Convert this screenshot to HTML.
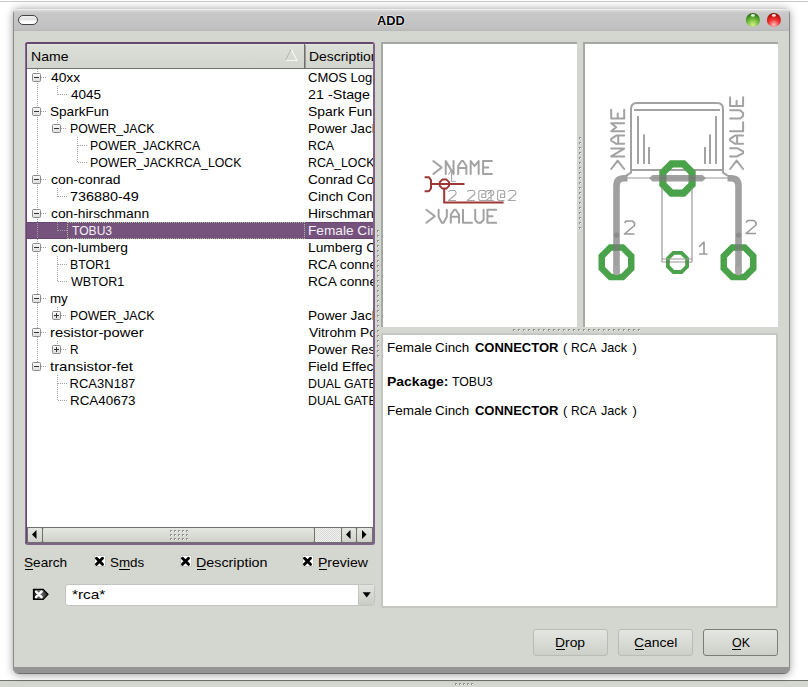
<!DOCTYPE html>
<html><head><meta charset="utf-8"><style>
*{margin:0;padding:0;box-sizing:border-box}
html,body{width:808px;height:687px;overflow:hidden;background:#fff;position:relative}
.t{position:absolute;font-family:"Liberation Sans",sans-serif;font-size:13px;line-height:30px;white-space:pre;transform-origin:0 0}
.a{position:absolute}
svg{position:absolute;left:0;top:0}
</style></head><body>
<div class="a" style="left:0;top:1px;width:808px;height:1px;background:#c8cac4"></div>
<!-- bottom parent window strip -->
<div class="a" style="left:0;top:680px;width:808px;height:1px;background:#70726d"></div>
<div class="a" style="left:0;top:681px;width:808px;height:6px;background:#d4d6d0"></div>
<!-- window shadow -->
<div class="a" style="left:13px;top:8px;width:777px;height:666px;border-radius:6px;box-shadow:0 1px 9px rgba(0,0,0,.38)"></div>
<!-- window frame -->
<div class="a" style="left:13px;top:8px;width:777px;height:666px;border-radius:6px;overflow:hidden;background:#d4d6d0">
  <div class="a" style="left:0;top:0;width:777px;height:23px;background:linear-gradient(#d2d2d2 0 1px,#eeeeee 1px 2px,#dcdcdc 2px,#c8c8c8 5px,#c0c0c0 21px,#b9b9b9 22px)"></div>
  <div class="a" style="left:0;top:0;width:1px;height:666px;background:#8a8a8a"></div>
  <div class="a" style="left:776px;top:0;width:1px;height:666px;background:#8a8a8a"></div>
  <div class="a" style="left:0;top:659px;width:777px;height:6px;background:#959595"></div>
  <div class="a" style="left:0;top:665px;width:777px;height:1px;background:#6e6e6e"></div>
</div>
<!-- title buttons -->
<div class="a" style="left:18px;top:15px;width:20px;height:10px;border-radius:5px;border:1px solid #444;background:linear-gradient(#f0f0f0,#e2e2e2 45%,#fdfdfd 65%,#ffffff)"></div>
<svg width="808" height="40" style="left:0;top:0">
<defs>
<radialGradient id="gg" cx="0.5" cy="0.85" r="0.85"><stop offset="0" stop-color="#d4f08a"/><stop offset="0.45" stop-color="#78c040"/><stop offset="0.8" stop-color="#3c8a1c"/><stop offset="1" stop-color="#1f5a0c"/></radialGradient>
<radialGradient id="rg" cx="0.5" cy="0.85" r="0.85"><stop offset="0" stop-color="#ffc0c0"/><stop offset="0.45" stop-color="#f03434"/><stop offset="0.8" stop-color="#c81414"/><stop offset="1" stop-color="#6e0404"/></radialGradient>
</defs>
<circle cx="752.9" cy="19.9" r="7" fill="url(#gg)"/>
<ellipse cx="752.9" cy="15.4" rx="2" ry="1.4" fill="#fff" opacity="0.85"/>
<circle cx="773.9" cy="19.9" r="7" fill="url(#rg)"/>
<ellipse cx="773.9" cy="15.4" rx="2" ry="1.4" fill="#fff" opacity="0.85"/>
</svg>


<!-- tree widget -->
<div class="a" style="left:25px;top:42px;width:350px;height:503px;border:2px solid #65466d;border-right-color:#7f6287;border-bottom-color:#7f6287;border-radius:3px;background:#fff;box-shadow:inset 0 0 0 0 #000"></div>
<div class="a" style="left:25px;top:45px;width:1px;height:497px;background:#8a6c92"></div>
<div class="a" style="left:27px;top:44px;width:346px;height:25px;background:linear-gradient(#e6e8e3 0,#dcded8 2px,#d2d4ce 100%);border-bottom:1px solid #70726d"></div>
<div class="a" style="left:304px;top:44px;width:1px;height:24px;background:#6e706b"></div><div class="a" style="left:305px;top:45px;width:1px;height:23px;background:#9a9c97"></div>
<svg width="808" height="687" style="pointer-events:none">
  <path d="M285.5,60.5L291,49L297,60.5Z" fill="none" stroke="#f6f6f4" stroke-width="1.2"/>
  <path d="M285.5,60.5L291,49" fill="none" stroke="#a8aaa5" stroke-width="1"/>
</svg>
<!-- selected row -->
<div class="a" style="left:27px;top:222px;width:346px;height:17px;background:#75537d;border-top:1px solid #6b4773;border-bottom:1px solid #6b4773"></div>
<div class="a" style="left:67px;top:222px;width:238px;height:17px;border:1px dotted #a8c49a"></div>
<svg width="808" height="687">
<defs><linearGradient id="bg" x1="0" y1="0" x2="0" y2="1"><stop offset="0" stop-color="#fafafa"/><stop offset="1" stop-color="#dcdcdc"/></linearGradient></defs>
<path d="M41,77.5H47" stroke="#a0a0a0" stroke-dasharray="1 1"/>
<path d="M58,94.5H67" stroke="#a0a0a0" stroke-dasharray="1 1"/>
<path d="M41,111.5H47" stroke="#a0a0a0" stroke-dasharray="1 1"/>
<path d="M61,128.5H67" stroke="#a0a0a0" stroke-dasharray="1 1"/>
<path d="M78,145.5H87" stroke="#a0a0a0" stroke-dasharray="1 1"/>
<path d="M78,162.5H87" stroke="#a0a0a0" stroke-dasharray="1 1"/>
<path d="M41,179.5H47" stroke="#a0a0a0" stroke-dasharray="1 1"/>
<path d="M58,196.5H67" stroke="#a0a0a0" stroke-dasharray="1 1"/>
<path d="M41,213.5H47" stroke="#a0a0a0" stroke-dasharray="1 1"/>
<path d="M58,230.5H67" stroke="#a0a0a0" stroke-dasharray="1 1"/>
<path d="M41,247.5H47" stroke="#a0a0a0" stroke-dasharray="1 1"/>
<path d="M58,264.5H67" stroke="#a0a0a0" stroke-dasharray="1 1"/>
<path d="M58,281.5H67" stroke="#a0a0a0" stroke-dasharray="1 1"/>
<path d="M41,298.5H47" stroke="#a0a0a0" stroke-dasharray="1 1"/>
<path d="M61,315.5H67" stroke="#a0a0a0" stroke-dasharray="1 1"/>
<path d="M41,332.5H47" stroke="#a0a0a0" stroke-dasharray="1 1"/>
<path d="M61,349.5H67" stroke="#a0a0a0" stroke-dasharray="1 1"/>
<path d="M41,366.5H47" stroke="#a0a0a0" stroke-dasharray="1 1"/>
<path d="M58,383.5H67" stroke="#a0a0a0" stroke-dasharray="1 1"/>
<path d="M58,400.5H67" stroke="#a0a0a0" stroke-dasharray="1 1"/>
<path d="M37.5,69V362" stroke="#a0a0a0" stroke-dasharray="1 1"/>
<path d="M57.5,86V95" stroke="#a0a0a0" stroke-dasharray="1 1"/>
<path d="M57.5,120V129" stroke="#a0a0a0" stroke-dasharray="1 1"/>
<path d="M77.5,137V163" stroke="#a0a0a0" stroke-dasharray="1 1"/>
<path d="M57.5,188V197" stroke="#a0a0a0" stroke-dasharray="1 1"/>
<path d="M57.5,222V231" stroke="#a0a0a0" stroke-dasharray="1 1"/>
<path d="M57.5,256V282" stroke="#a0a0a0" stroke-dasharray="1 1"/>
<path d="M57.5,307V316" stroke="#a0a0a0" stroke-dasharray="1 1"/>
<path d="M57.5,341V350" stroke="#a0a0a0" stroke-dasharray="1 1"/>
<path d="M57.5,375V401" stroke="#a0a0a0" stroke-dasharray="1 1"/>
<rect x="32.5" y="73.5" width="8" height="8" rx="1" fill="url(#bg)" stroke="#8a8a8a"/>
<path d="M34,77.5H39" stroke="#333"/>
<rect x="32.5" y="107.5" width="8" height="8" rx="1" fill="url(#bg)" stroke="#8a8a8a"/>
<path d="M34,111.5H39" stroke="#333"/>
<rect x="52.5" y="124.5" width="8" height="8" rx="1" fill="url(#bg)" stroke="#8a8a8a"/>
<path d="M54,128.5H59" stroke="#333"/>
<rect x="32.5" y="175.5" width="8" height="8" rx="1" fill="url(#bg)" stroke="#8a8a8a"/>
<path d="M34,179.5H39" stroke="#333"/>
<rect x="32.5" y="209.5" width="8" height="8" rx="1" fill="url(#bg)" stroke="#8a8a8a"/>
<path d="M34,213.5H39" stroke="#333"/>
<rect x="32.5" y="243.5" width="8" height="8" rx="1" fill="url(#bg)" stroke="#8a8a8a"/>
<path d="M34,247.5H39" stroke="#333"/>
<rect x="32.5" y="294.5" width="8" height="8" rx="1" fill="url(#bg)" stroke="#8a8a8a"/>
<path d="M34,298.5H39" stroke="#333"/>
<rect x="52.5" y="311.5" width="8" height="8" rx="1" fill="url(#bg)" stroke="#8a8a8a"/>
<path d="M54,315.5H59" stroke="#333"/>
<path d="M56.5,313V318" stroke="#333"/>
<rect x="32.5" y="328.5" width="8" height="8" rx="1" fill="url(#bg)" stroke="#8a8a8a"/>
<path d="M34,332.5H39" stroke="#333"/>
<rect x="52.5" y="345.5" width="8" height="8" rx="1" fill="url(#bg)" stroke="#8a8a8a"/>
<path d="M54,349.5H59" stroke="#333"/>
<path d="M56.5,347V352" stroke="#333"/>
<rect x="32.5" y="362.5" width="8" height="8" rx="1" fill="url(#bg)" stroke="#8a8a8a"/>
<path d="M34,366.5H39" stroke="#333"/>
</svg>
<div class="a" style="left:0;top:0;width:808px;height:687px;clip-path:inset(44px 435px 160px 27px)">
<span class="t" style="left:30.92px;top:42px;color:#000;transform:scaleX(1.080);">Name</span>
<span class="t" style="left:309.13px;top:42px;color:#000;transform:scaleX(1.070);">Description</span>
<span class="t" style="left:50.80px;top:63px;color:#000;transform:scaleX(1.063);">40xx</span>
<span class="t" style="left:308.00px;top:63px;color:#000;">CMOS Logic Family</span>
<span class="t" style="left:71.10px;top:80px;color:#000;transform:scaleX(1.038);">4045</span>
<span class="t" style="left:307.90px;top:80px;color:#000;transform:scaleX(1.100);">21 -Stage Binary Counter</span>
<span class="t" style="left:49.76px;top:97px;color:#000;transform:scaleX(1.044);">SparkFun</span>
<span class="t" style="left:307.93px;top:97px;color:#000;transform:scaleX(1.070);">Spark Fun Electronics</span>
<span class="t" style="left:69.66px;top:114px;color:#000;transform:scaleX(0.944);">POWER_JACK</span>
<span class="t" style="left:307.95px;top:114px;color:#000;transform:scaleX(1.050);">Power Jack</span>
<span class="t" style="left:89.76px;top:131px;color:#000;transform:scaleX(0.941);">POWER_JACKRCA</span>
<span class="t" style="left:308.05px;top:131px;color:#000;transform:scaleX(0.950);">RCA</span>
<span class="t" style="left:89.75px;top:148px;color:#000;transform:scaleX(0.949);">POWER_JACKRCA_LOCK</span>
<span class="t" style="left:308.05px;top:148px;color:#000;transform:scaleX(0.950);">RCA_LOCK</span>
<span class="t" style="left:50.80px;top:165px;color:#000;transform:scaleX(1.067);">con-conrad</span>
<span class="t" style="left:307.95px;top:165px;color:#000;transform:scaleX(1.050);">Conrad Connectors</span>
<span class="t" style="left:70.00px;top:182px;color:#000;transform:scaleX(1.105);">736880-49</span>
<span class="t" style="left:307.94px;top:182px;color:#000;transform:scaleX(1.060);">Cinch Connector</span>
<span class="t" style="left:50.80px;top:199px;color:#000;transform:scaleX(1.061);">con-hirschmann</span>
<span class="t" style="left:307.94px;top:199px;color:#000;transform:scaleX(1.060);">Hirschmann Connectors</span>
<span class="t" style="left:71.50px;top:216px;color:#f4f0f6;transform:scaleX(0.930);">TOBU3</span>
<span class="t" style="left:307.95px;top:216px;color:#f4f0f6;transform:scaleX(1.050);">Female Cinch CONNECTOR</span>
<span class="t" style="left:50.80px;top:233px;color:#000;transform:scaleX(1.064);">con-lumberg</span>
<span class="t" style="left:307.94px;top:233px;color:#000;transform:scaleX(1.060);">Lumberg Connectors</span>
<span class="t" style="left:69.66px;top:250px;color:#000;transform:scaleX(0.943);">BTOR1</span>
<span class="t" style="left:307.95px;top:250px;color:#000;transform:scaleX(1.050);">RCA connector</span>
<span class="t" style="left:70.60px;top:267px;color:#000;transform:scaleX(0.960);">WBTOR1</span>
<span class="t" style="left:307.95px;top:267px;color:#000;transform:scaleX(1.050);">RCA connector</span>
<span class="t" style="left:49.77px;top:284px;color:#000;transform:scaleX(1.025);">my</span>
<span class="t" style="left:69.66px;top:301px;color:#000;transform:scaleX(0.944);">POWER_JACK</span>
<span class="t" style="left:307.95px;top:301px;color:#000;transform:scaleX(1.050);">Power Jack</span>
<span class="t" style="left:49.66px;top:318px;color:#000;transform:scaleX(1.136);">resistor-power</span>
<span class="t" style="left:309.00px;top:318px;color:#000;transform:scaleX(1.060);">Vitrohm Power Resistor</span>
<span class="t" style="left:69.69px;top:335px;color:#000;transform:scaleX(0.913);">R</span>
<span class="t" style="left:307.94px;top:335px;color:#000;transform:scaleX(1.060);">Power Resistor</span>
<span class="t" style="left:50.20px;top:352px;color:#000;transform:scaleX(1.149);">transistor-fet</span>
<span class="t" style="left:307.93px;top:352px;color:#000;transform:scaleX(1.070);">Field Effect Transistors</span>
<span class="t" style="left:69.60px;top:369px;color:#000;">RCA3N187</span>
<span class="t" style="left:308.05px;top:369px;color:#000;transform:scaleX(0.950);">DUAL GATE MOSFET</span>
<span class="t" style="left:69.57px;top:386px;color:#000;transform:scaleX(1.031);">RCA40673</span>
<span class="t" style="left:308.05px;top:386px;color:#000;transform:scaleX(0.950);">DUAL GATE MOSFET</span>
</div>
<!-- scrollbar -->
<div class="a" style="left:27px;top:527px;width:346px;height:16px;background:#d4d6d0;border-top:1px solid #6e706b;border-bottom:1px solid #6e706b"></div>
<div class="a" style="left:27px;top:527px;width:16px;height:16px;border:1px solid #6e706b;border-radius:2px;background:linear-gradient(#e4e6e1,#cfd1cb)"></div>
<div class="a" style="left:42px;top:527px;width:273px;height:16px;border:1px solid #6e706b;border-radius:2px;background:linear-gradient(#e4e6e1,#cfd1cb)"></div>
<div class="a" style="left:315px;top:528px;width:27px;height:14px;background-image:conic-gradient(#d8d8d6 25%,#f2f2f0 0 50%,#d8d8d6 0 75%,#f2f2f0 0);background-size:2px 2px"></div>
<div class="a" style="left:341px;top:527px;width:16px;height:16px;border:1px solid #6e706b;border-radius:2px;background:linear-gradient(#e4e6e1,#cfd1cb)"></div>
<div class="a" style="left:356px;top:527px;width:17px;height:16px;border:1px solid #6e706b;border-radius:2px;background:linear-gradient(#e4e6e1,#cfd1cb)"></div>
<svg width="808" height="687">
  <path d="M32,534.5L36.5,530V539Z" fill="#000"/>
  <path d="M346,534.5L350.5,530V539Z" fill="#000"/>
  <path d="M366.5,534.5L362,530V539Z" fill="#000"/>
</svg>

<!-- preview panels -->
<div class="a" style="left:381px;top:42px;width:196px;height:285px;background:#fff;border-top:2px solid #a6a8a3;border-left:2px solid #a6a8a3"></div>
<div class="a" style="left:583px;top:42px;width:195px;height:285px;background:#fff;border-top:2px solid #a6a8a3;border-left:2px solid #a6a8a3"></div>
<svg width="808" height="687" style="pointer-events:none"><g fill="none" stroke-linecap="round" stroke-linejoin="round">
<path transform="translate(433.3,161)" d="M0.00,0.00L8.40,6.50L0.00,13.00M12.45,13.00V0L20.25,13.00V0M24.90,13.00V5L28.20,0.00H29.80L33.10,5.00V13M24.90,7.00H33.10M37.35,13.00V0L41.35,5.00L45.35,0.00V13M58.60,0.00H49.80V13H58.60M49.80,6.50H55.00" stroke="#a2a2a2" stroke-width="2"/>
<path transform="translate(426.4,209.8)" d="M0.00,0.00L8.40,6.50L0.00,13.00M12.20,0.00V7L15.40,13.00H17.20L20.40,7.00V0M24.40,13.00V5L27.70,0.00H29.30L32.60,5.00V13M24.40,7.00H32.60M36.60,0.00V13H45.60M48.80,0.00V10L51.40,13.00H54.40L57.20,10.00V0M69.80,0.00H61.00V13H69.80M61.00,6.50H66.20" stroke="#a2a2a2" stroke-width="2"/>
<path d="M424.6,177.3H429L431,180V188.5L429,191.2H424.6" stroke="#9e3636" stroke-width="2" stroke-linecap="butt"/>
<path d="M431,184H464.5" stroke="#9e3636" stroke-width="2" stroke-linecap="butt"/>
<path d="M449.00,185.91L446.31,188.60L442.49,188.60L439.80,185.91L439.80,182.09L442.49,179.40L446.31,179.40L449.00,182.09Z" stroke="#9e3636" stroke-width="2"/>
<path d="M444.2,189V202.6H503.6" stroke="#9e3636" stroke-width="2" stroke-linecap="butt" stroke-linejoin="miter"/>
<path d="M448.5,174.5L451.6,169.8V181.3H455.9" stroke="#a6a6a6" stroke-width="1.1" stroke-linecap="butt"/>
<path d="M448.5,192.0L449.7,190.5H454.8L456.0,192.0V194.0L448.5,200.5H456.0M467.3,192.0L468.5,190.5H473.6L474.8,192.0V194.0L467.3,200.5H474.8M485.8,200.5H480.0L478.8,199.3V191.7L480.0,190.5H484.6L485.8,191.7V197.5H481.8V194.0H485.8M486.2,192.0L487.4,190.5H492.5L493.7,192.0V194.0L486.2,200.5H493.7M504.6,200.5H498.8L497.6,199.3V191.7L498.8,190.5H503.40000000000003L504.6,191.7V197.5H500.6V194.0H504.6M508.3,192.0L509.5,190.5H514.6L515.8,192.0V194.0L508.3,200.5H515.8M491,200V191L488,194" stroke="#a6a6a6" stroke-width="1.1" stroke-linecap="butt"/>
<path transform="translate(611.2,169) rotate(-90)" d="M0.00,0.00L8.40,6.50L0.00,13.00M12.60,13.00V0L20.40,13.00V0M25.20,13.00V5L28.50,0.00H30.10L33.40,5.00V13M25.20,7.00H33.40M37.80,13.00V0L41.80,5.00L45.80,0.00V13M59.20,0.00H50.40V13H59.20M50.40,6.50H55.60" stroke="#a2a2a2" stroke-width="2"/>
<path transform="translate(730.1,169) rotate(-90)" d="M0.00,0.00L8.40,6.50L0.00,13.00M12.60,0.00V7L15.80,13.00H17.60L20.80,7.00V0M25.20,13.00V5L28.50,0.00H30.10L33.40,5.00V13M25.20,7.00H33.40M37.80,0.00V13H46.80M50.40,0.00V10L53.00,13.00H56.00L58.80,10.00V0M71.80,0.00H63.00V13H71.80M63.00,6.50H68.20" stroke="#a2a2a2" stroke-width="2"/>
<path d="M626.4,175.6L631,172.6V109Q631,103 637,103H717Q723,103 723,109V172.6L727.6,175.6" stroke="#a2a2a2" stroke-width="2" stroke-linecap="butt"/>
<path d="M634,110H720M632,170H722M638,116V164M644,134.6V164M649,147V164M716,116V164M710,134.6V164M705,147V164" stroke="#a2a2a2" stroke-width="2" stroke-linecap="butt"/>
<path d="M631.25,268.41L622.61,277.05L610.39,277.05L601.75,268.41L601.75,256.19L610.39,247.55L622.61,247.55L631.25,256.19ZM753.25,268.41L744.61,277.05L732.39,277.05L723.75,268.41L723.75,256.19L732.39,247.55L744.61,247.55L753.25,256.19Z" stroke="#4aa24a" stroke-width="6.5" stroke-linejoin="miter"/>
<path d="M692.10,184.55L683.55,193.10L671.45,193.10L662.90,184.55L662.90,172.45L671.45,163.90L683.55,163.90L692.10,172.45Z" stroke="#4aa24a" stroke-width="7.2" stroke-linejoin="miter"/>
<path d="M687.10,266.38L681.48,272.00L673.52,272.00L667.90,266.38L667.90,258.42L673.52,252.80L681.48,252.80L687.10,258.42Z" stroke="#4aa24a" stroke-width="3.8" stroke-linejoin="miter"/>
<g opacity="0.72">
<path d="M616.5,272V186Q616.5,178.3 624.2,178.3H627.5M738.5,272V186Q738.5,178.3 730.8,178.3H727.5" stroke="#7c7c7c" stroke-width="6.6" stroke-linecap="butt" stroke-linejoin="round"/>
<path d="M649,178.3L652.6,175H702.4L706,178.3L702.4,181.6H652.6Z" fill="#7c7c7c" stroke="none"/>
<path d="M627,178H729M662,262H692" stroke="#727272" stroke-width="1.1" stroke-linecap="butt"/>
</g>
<path d="M662,187.5V262M692,187.5V262M662,259H692" stroke="#9a9a9a" stroke-width="1.2" stroke-linecap="butt"/>
<path d="M616.5,269V272M738.5,269V272" stroke="#a6a6a6" stroke-width="6.6" stroke-linecap="round"/>
<circle cx="616.5" cy="235.2" r="2.6" fill="#8c8c8c" stroke="none"/><circle cx="738.5" cy="235.2" r="2.6" fill="#8c8c8c" stroke="none"/>
<path d="M624.5,223L626.3,221H632.5L634.5,223V225.5L624.5,234H634.5M746,222.5L747.8,220.5H754L756,222.5V225.0L746,233.5H756M699,247L704,242V254M699,254H707.5" stroke="#999999" stroke-width="1.6" stroke-linecap="butt"/>
</g></svg>
<div class="a" style="left:381px;top:333px;width:397px;height:275px;background:#fff;border:2px solid #c4c6c1;border-radius:2px"></div>



<!-- checkboxes -->
<div class="a" style="left:94px;top:555px;width:12px;height:12px;background:#fff;border:1px solid #c8cac5"></div>
<div class="a" style="left:180px;top:555px;width:12px;height:12px;background:#fff;border:1px solid #c8cac5"></div>
<div class="a" style="left:302px;top:555px;width:12px;height:12px;background:#fff;border:1px solid #c8cac5"></div>
<!-- combo -->
<div class="a" style="left:65px;top:584px;width:310px;height:22px;background:#fff;border:1px solid #c2c4bf;border-radius:3px"></div>
<div class="a" style="left:358px;top:585px;width:16px;height:20px;background:linear-gradient(#e2e4df,#c9cbc5);border-left:1px solid #c2c4bf"></div>
<!-- buttons -->
<div class="a" style="left:533px;top:629px;width:75px;height:27px;border:1px solid #b9bbb6;border-radius:3px;background:linear-gradient(#e4e6e1,#cdcfc9)"></div>
<div class="a" style="left:618px;top:629px;width:75px;height:27px;border:1px solid #b9bbb6;border-radius:3px;background:linear-gradient(#e4e6e1,#cdcfc9)"></div>
<div class="a" style="left:703px;top:629px;width:75px;height:27px;border:1px solid #7a7c77;border-radius:3px;background:linear-gradient(#e4e6e1,#cdcfc9)"></div>
<span class="t" style="left:376.50px;top:6px;color:#000;font-weight:700;transform:scaleX(0.982);text-shadow:0 0 1.5px #fff,0 0 1.5px #fff,0 0 1px #fff;">ADD</span>
<span class="t" style="left:386.56px;top:333px;color:#000;transform:scaleX(1.036);">Female</span>
<span class="t" style="left:435.47px;top:333px;color:#000;transform:scaleX(1.031);">Cinch</span>
<span class="t" style="left:474.90px;top:333px;color:#000;font-weight:700;">CONNECTOR</span>
<span class="t" style="left:562.90px;top:333px;color:#000;">(</span>
<span class="t" style="left:571.47px;top:333px;color:#000;transform:scaleX(0.931);">RCA</span>
<span class="t" style="left:600.80px;top:333px;color:#000;transform:scaleX(0.974);">Jack</span>
<span class="t" style="left:632.40px;top:333px;color:#000;">)</span>
<span class="t" style="left:386.53px;top:367px;color:#000;font-weight:700;transform:scaleX(1.075);">Package:</span>
<span class="t" style="left:452.40px;top:367px;color:#000;transform:scaleX(0.944);">TOBU3</span>
<span class="t" style="left:386.56px;top:396px;color:#000;transform:scaleX(1.036);">Female</span>
<span class="t" style="left:435.47px;top:396px;color:#000;transform:scaleX(1.031);">Cinch</span>
<span class="t" style="left:474.90px;top:396px;color:#000;font-weight:700;">CONNECTOR</span>
<span class="t" style="left:562.90px;top:396px;color:#000;">(</span>
<span class="t" style="left:571.47px;top:396px;color:#000;transform:scaleX(0.931);">RCA</span>
<span class="t" style="left:600.80px;top:396px;color:#000;transform:scaleX(0.974);">Jack</span>
<span class="t" style="left:632.40px;top:396px;color:#000;">)</span>
<span class="t" style="left:24.15px;top:548px;color:#000;transform:scaleX(1.047);">Search</span>
<span class="t" style="left:110.47px;top:548px;color:#000;transform:scaleX(1.028);">Smds</span>
<span class="t" style="left:196.20px;top:548px;color:#000;transform:scaleX(1.100);">Description</span>
<span class="t" style="left:318.32px;top:548px;color:#000;transform:scaleX(1.080);">Preview</span>
<span class="t" style="left:71.70px;top:580px;color:#000;transform:scaleX(1.182);">*rca*</span>
<span class="t" style="left:555.43px;top:628px;color:#000;transform:scaleX(1.067);">Drop</span>
<span class="t" style="left:633.93px;top:628px;color:#000;transform:scaleX(1.072);">Cancel</span>
<span class="t" style="left:732.00px;top:628px;color:#000;transform:scaleX(0.956);">OK</span>
<svg width="808" height="687" style="pointer-events:none">
<path d="M96.5,558.3L102.5,564.3M102.5,558.3L96.5,564.3" stroke="#000" stroke-width="3" stroke-linecap="round"/>
<path d="M182.5,558.3L188.5,564.3M188.5,558.3L182.5,564.3" stroke="#000" stroke-width="3" stroke-linecap="round"/>
<path d="M304.5,558.3L310.5,564.3M310.5,558.3L304.5,564.3" stroke="#000" stroke-width="3" stroke-linecap="round"/>
<defs><linearGradient id="cg" x1="0" y1="0" x2="1" y2="0"><stop offset="0" stop-color="#111"/><stop offset="0.45" stop-color="#777"/><stop offset="1" stop-color="#222"/></linearGradient></defs>
<path d="M33.5,589.3H43.2L48,594.3L43.2,599.3H33.5Z" fill="url(#cg)" stroke="#000" stroke-width="1.2"/>
<path d="M36,591.6L41.6,597.2M41.6,591.6L36,597.2" stroke="#fff" stroke-width="2.4" stroke-linecap="round"/>
<path d="M362.7,592.3H370.7L366.7,597.5Z" fill="#000"/>
<rect x="25" y="569" width="8" height="1" fill="#000"/>
<rect x="119" y="569" width="11" height="1" fill="#000"/>
<rect x="197" y="569" width="9" height="1" fill="#000"/>
<rect x="319" y="569" width="8" height="1" fill="#000"/>
<rect x="556" y="649" width="9" height="1" fill="#000"/>
<rect x="635" y="649" width="9" height="1" fill="#000"/>
<rect x="732" y="649" width="9" height="1" fill="#000"/>
<rect x="377" y="230" width="2" height="2" fill="#8e908b"/><rect x="378" y="231" width="1" height="1" fill="#ffffff"/>
<rect x="377" y="235" width="2" height="2" fill="#8e908b"/><rect x="378" y="236" width="1" height="1" fill="#ffffff"/>
<rect x="377" y="240" width="2" height="2" fill="#8e908b"/><rect x="378" y="241" width="1" height="1" fill="#ffffff"/>
<rect x="377" y="245" width="2" height="2" fill="#8e908b"/><rect x="378" y="246" width="1" height="1" fill="#ffffff"/>
<rect x="377" y="250" width="2" height="2" fill="#8e908b"/><rect x="378" y="251" width="1" height="1" fill="#ffffff"/>
<rect x="377" y="255" width="2" height="2" fill="#8e908b"/><rect x="378" y="256" width="1" height="1" fill="#ffffff"/>
<rect x="377" y="260" width="2" height="2" fill="#8e908b"/><rect x="378" y="261" width="1" height="1" fill="#ffffff"/>
<rect x="377" y="265" width="2" height="2" fill="#8e908b"/><rect x="378" y="266" width="1" height="1" fill="#ffffff"/>
<rect x="377" y="270" width="2" height="2" fill="#8e908b"/><rect x="378" y="271" width="1" height="1" fill="#ffffff"/>
<rect x="377" y="275" width="2" height="2" fill="#8e908b"/><rect x="378" y="276" width="1" height="1" fill="#ffffff"/>
<rect x="377" y="280" width="2" height="2" fill="#8e908b"/><rect x="378" y="281" width="1" height="1" fill="#ffffff"/>
<rect x="377" y="285" width="2" height="2" fill="#8e908b"/><rect x="378" y="286" width="1" height="1" fill="#ffffff"/>
<rect x="377" y="290" width="2" height="2" fill="#8e908b"/><rect x="378" y="291" width="1" height="1" fill="#ffffff"/>
<rect x="377" y="295" width="2" height="2" fill="#8e908b"/><rect x="378" y="296" width="1" height="1" fill="#ffffff"/>
<rect x="377" y="300" width="2" height="2" fill="#8e908b"/><rect x="378" y="301" width="1" height="1" fill="#ffffff"/>
<rect x="377" y="305" width="2" height="2" fill="#8e908b"/><rect x="378" y="306" width="1" height="1" fill="#ffffff"/>
<rect x="377" y="310" width="2" height="2" fill="#8e908b"/><rect x="378" y="311" width="1" height="1" fill="#ffffff"/>
<rect x="377" y="315" width="2" height="2" fill="#8e908b"/><rect x="378" y="316" width="1" height="1" fill="#ffffff"/>
<rect x="377" y="320" width="2" height="2" fill="#8e908b"/><rect x="378" y="321" width="1" height="1" fill="#ffffff"/>
<rect x="377" y="325" width="2" height="2" fill="#8e908b"/><rect x="378" y="326" width="1" height="1" fill="#ffffff"/>
<rect x="377" y="330" width="2" height="2" fill="#8e908b"/><rect x="378" y="331" width="1" height="1" fill="#ffffff"/>
<rect x="377" y="335" width="2" height="2" fill="#8e908b"/><rect x="378" y="336" width="1" height="1" fill="#ffffff"/>
<rect x="377" y="340" width="2" height="2" fill="#8e908b"/><rect x="378" y="341" width="1" height="1" fill="#ffffff"/>
<rect x="377" y="345" width="2" height="2" fill="#8e908b"/><rect x="378" y="346" width="1" height="1" fill="#ffffff"/>
<rect x="377" y="350" width="2" height="2" fill="#8e908b"/><rect x="378" y="351" width="1" height="1" fill="#ffffff"/>
<rect x="377" y="355" width="2" height="2" fill="#8e908b"/><rect x="378" y="356" width="1" height="1" fill="#ffffff"/>
<rect x="579" y="137" width="2" height="2" fill="#8e908b"/><rect x="580" y="138" width="1" height="1" fill="#ffffff"/>
<rect x="579" y="142" width="2" height="2" fill="#8e908b"/><rect x="580" y="143" width="1" height="1" fill="#ffffff"/>
<rect x="579" y="147" width="2" height="2" fill="#8e908b"/><rect x="580" y="148" width="1" height="1" fill="#ffffff"/>
<rect x="579" y="152" width="2" height="2" fill="#8e908b"/><rect x="580" y="153" width="1" height="1" fill="#ffffff"/>
<rect x="579" y="157" width="2" height="2" fill="#8e908b"/><rect x="580" y="158" width="1" height="1" fill="#ffffff"/>
<rect x="579" y="162" width="2" height="2" fill="#8e908b"/><rect x="580" y="163" width="1" height="1" fill="#ffffff"/>
<rect x="579" y="167" width="2" height="2" fill="#8e908b"/><rect x="580" y="168" width="1" height="1" fill="#ffffff"/>
<rect x="579" y="172" width="2" height="2" fill="#8e908b"/><rect x="580" y="173" width="1" height="1" fill="#ffffff"/>
<rect x="579" y="177" width="2" height="2" fill="#8e908b"/><rect x="580" y="178" width="1" height="1" fill="#ffffff"/>
<rect x="579" y="182" width="2" height="2" fill="#8e908b"/><rect x="580" y="183" width="1" height="1" fill="#ffffff"/>
<rect x="579" y="187" width="2" height="2" fill="#8e908b"/><rect x="580" y="188" width="1" height="1" fill="#ffffff"/>
<rect x="579" y="192" width="2" height="2" fill="#8e908b"/><rect x="580" y="193" width="1" height="1" fill="#ffffff"/>
<rect x="579" y="197" width="2" height="2" fill="#8e908b"/><rect x="580" y="198" width="1" height="1" fill="#ffffff"/>
<rect x="579" y="202" width="2" height="2" fill="#8e908b"/><rect x="580" y="203" width="1" height="1" fill="#ffffff"/>
<rect x="579" y="207" width="2" height="2" fill="#8e908b"/><rect x="580" y="208" width="1" height="1" fill="#ffffff"/>
<rect x="579" y="212" width="2" height="2" fill="#8e908b"/><rect x="580" y="213" width="1" height="1" fill="#ffffff"/>
<rect x="579" y="217" width="2" height="2" fill="#8e908b"/><rect x="580" y="218" width="1" height="1" fill="#ffffff"/>
<rect x="579" y="222" width="2" height="2" fill="#8e908b"/><rect x="580" y="223" width="1" height="1" fill="#ffffff"/>
<rect x="579" y="227" width="2" height="2" fill="#8e908b"/><rect x="580" y="228" width="1" height="1" fill="#ffffff"/>
<rect x="513" y="329" width="2" height="2" fill="#8e908b"/><rect x="514" y="330" width="1" height="1" fill="#ffffff"/>
<rect x="518" y="329" width="2" height="2" fill="#8e908b"/><rect x="519" y="330" width="1" height="1" fill="#ffffff"/>
<rect x="523" y="329" width="2" height="2" fill="#8e908b"/><rect x="524" y="330" width="1" height="1" fill="#ffffff"/>
<rect x="528" y="329" width="2" height="2" fill="#8e908b"/><rect x="529" y="330" width="1" height="1" fill="#ffffff"/>
<rect x="533" y="329" width="2" height="2" fill="#8e908b"/><rect x="534" y="330" width="1" height="1" fill="#ffffff"/>
<rect x="538" y="329" width="2" height="2" fill="#8e908b"/><rect x="539" y="330" width="1" height="1" fill="#ffffff"/>
<rect x="543" y="329" width="2" height="2" fill="#8e908b"/><rect x="544" y="330" width="1" height="1" fill="#ffffff"/>
<rect x="548" y="329" width="2" height="2" fill="#8e908b"/><rect x="549" y="330" width="1" height="1" fill="#ffffff"/>
<rect x="553" y="329" width="2" height="2" fill="#8e908b"/><rect x="554" y="330" width="1" height="1" fill="#ffffff"/>
<rect x="558" y="329" width="2" height="2" fill="#8e908b"/><rect x="559" y="330" width="1" height="1" fill="#ffffff"/>
<rect x="563" y="329" width="2" height="2" fill="#8e908b"/><rect x="564" y="330" width="1" height="1" fill="#ffffff"/>
<rect x="568" y="329" width="2" height="2" fill="#8e908b"/><rect x="569" y="330" width="1" height="1" fill="#ffffff"/>
<rect x="573" y="329" width="2" height="2" fill="#8e908b"/><rect x="574" y="330" width="1" height="1" fill="#ffffff"/>
<rect x="578" y="329" width="2" height="2" fill="#8e908b"/><rect x="579" y="330" width="1" height="1" fill="#ffffff"/>
<rect x="583" y="329" width="2" height="2" fill="#8e908b"/><rect x="584" y="330" width="1" height="1" fill="#ffffff"/>
<rect x="588" y="329" width="2" height="2" fill="#8e908b"/><rect x="589" y="330" width="1" height="1" fill="#ffffff"/>
<rect x="593" y="329" width="2" height="2" fill="#8e908b"/><rect x="594" y="330" width="1" height="1" fill="#ffffff"/>
<rect x="598" y="329" width="2" height="2" fill="#8e908b"/><rect x="599" y="330" width="1" height="1" fill="#ffffff"/>
<rect x="603" y="329" width="2" height="2" fill="#8e908b"/><rect x="604" y="330" width="1" height="1" fill="#ffffff"/>
<rect x="608" y="329" width="2" height="2" fill="#8e908b"/><rect x="609" y="330" width="1" height="1" fill="#ffffff"/>
<rect x="613" y="329" width="2" height="2" fill="#8e908b"/><rect x="614" y="330" width="1" height="1" fill="#ffffff"/>
<rect x="618" y="329" width="2" height="2" fill="#8e908b"/><rect x="619" y="330" width="1" height="1" fill="#ffffff"/>
<rect x="623" y="329" width="2" height="2" fill="#8e908b"/><rect x="624" y="330" width="1" height="1" fill="#ffffff"/>
<rect x="628" y="329" width="2" height="2" fill="#8e908b"/><rect x="629" y="330" width="1" height="1" fill="#ffffff"/>
<rect x="633" y="329" width="2" height="2" fill="#8e908b"/><rect x="634" y="330" width="1" height="1" fill="#ffffff"/>
<rect x="638" y="329" width="2" height="2" fill="#8e908b"/><rect x="639" y="330" width="1" height="1" fill="#ffffff"/>
<rect x="455" y="683" width="2" height="2" fill="#8e908b"/><rect x="456" y="684" width="1" height="1" fill="#ffffff"/>
<rect x="459" y="683" width="2" height="2" fill="#8e908b"/><rect x="460" y="684" width="1" height="1" fill="#ffffff"/>
<rect x="463" y="683" width="2" height="2" fill="#8e908b"/><rect x="464" y="684" width="1" height="1" fill="#ffffff"/>
<rect x="467" y="683" width="2" height="2" fill="#8e908b"/><rect x="468" y="684" width="1" height="1" fill="#ffffff"/>
<rect x="471" y="683" width="2" height="2" fill="#8e908b"/><rect x="472" y="684" width="1" height="1" fill="#ffffff"/>
<rect x="170" y="530" width="2" height="2" fill="#8e908b"/><rect x="171" y="531" width="1" height="1" fill="#ffffff"/>
<rect x="174" y="530" width="2" height="2" fill="#8e908b"/><rect x="175" y="531" width="1" height="1" fill="#ffffff"/>
<rect x="178" y="530" width="2" height="2" fill="#8e908b"/><rect x="179" y="531" width="1" height="1" fill="#ffffff"/>
<rect x="182" y="530" width="2" height="2" fill="#8e908b"/><rect x="183" y="531" width="1" height="1" fill="#ffffff"/>
<rect x="186" y="530" width="2" height="2" fill="#8e908b"/><rect x="187" y="531" width="1" height="1" fill="#ffffff"/>
<rect x="170" y="534" width="2" height="2" fill="#8e908b"/><rect x="171" y="535" width="1" height="1" fill="#ffffff"/>
<rect x="174" y="534" width="2" height="2" fill="#8e908b"/><rect x="175" y="535" width="1" height="1" fill="#ffffff"/>
<rect x="178" y="534" width="2" height="2" fill="#8e908b"/><rect x="179" y="535" width="1" height="1" fill="#ffffff"/>
<rect x="182" y="534" width="2" height="2" fill="#8e908b"/><rect x="183" y="535" width="1" height="1" fill="#ffffff"/>
<rect x="186" y="534" width="2" height="2" fill="#8e908b"/><rect x="187" y="535" width="1" height="1" fill="#ffffff"/>
<rect x="170" y="538" width="2" height="2" fill="#8e908b"/><rect x="171" y="539" width="1" height="1" fill="#ffffff"/>
<rect x="174" y="538" width="2" height="2" fill="#8e908b"/><rect x="175" y="539" width="1" height="1" fill="#ffffff"/>
<rect x="178" y="538" width="2" height="2" fill="#8e908b"/><rect x="179" y="539" width="1" height="1" fill="#ffffff"/>
<rect x="182" y="538" width="2" height="2" fill="#8e908b"/><rect x="183" y="539" width="1" height="1" fill="#ffffff"/>
<rect x="186" y="538" width="2" height="2" fill="#8e908b"/><rect x="187" y="539" width="1" height="1" fill="#ffffff"/>
</svg>
</body></html>
